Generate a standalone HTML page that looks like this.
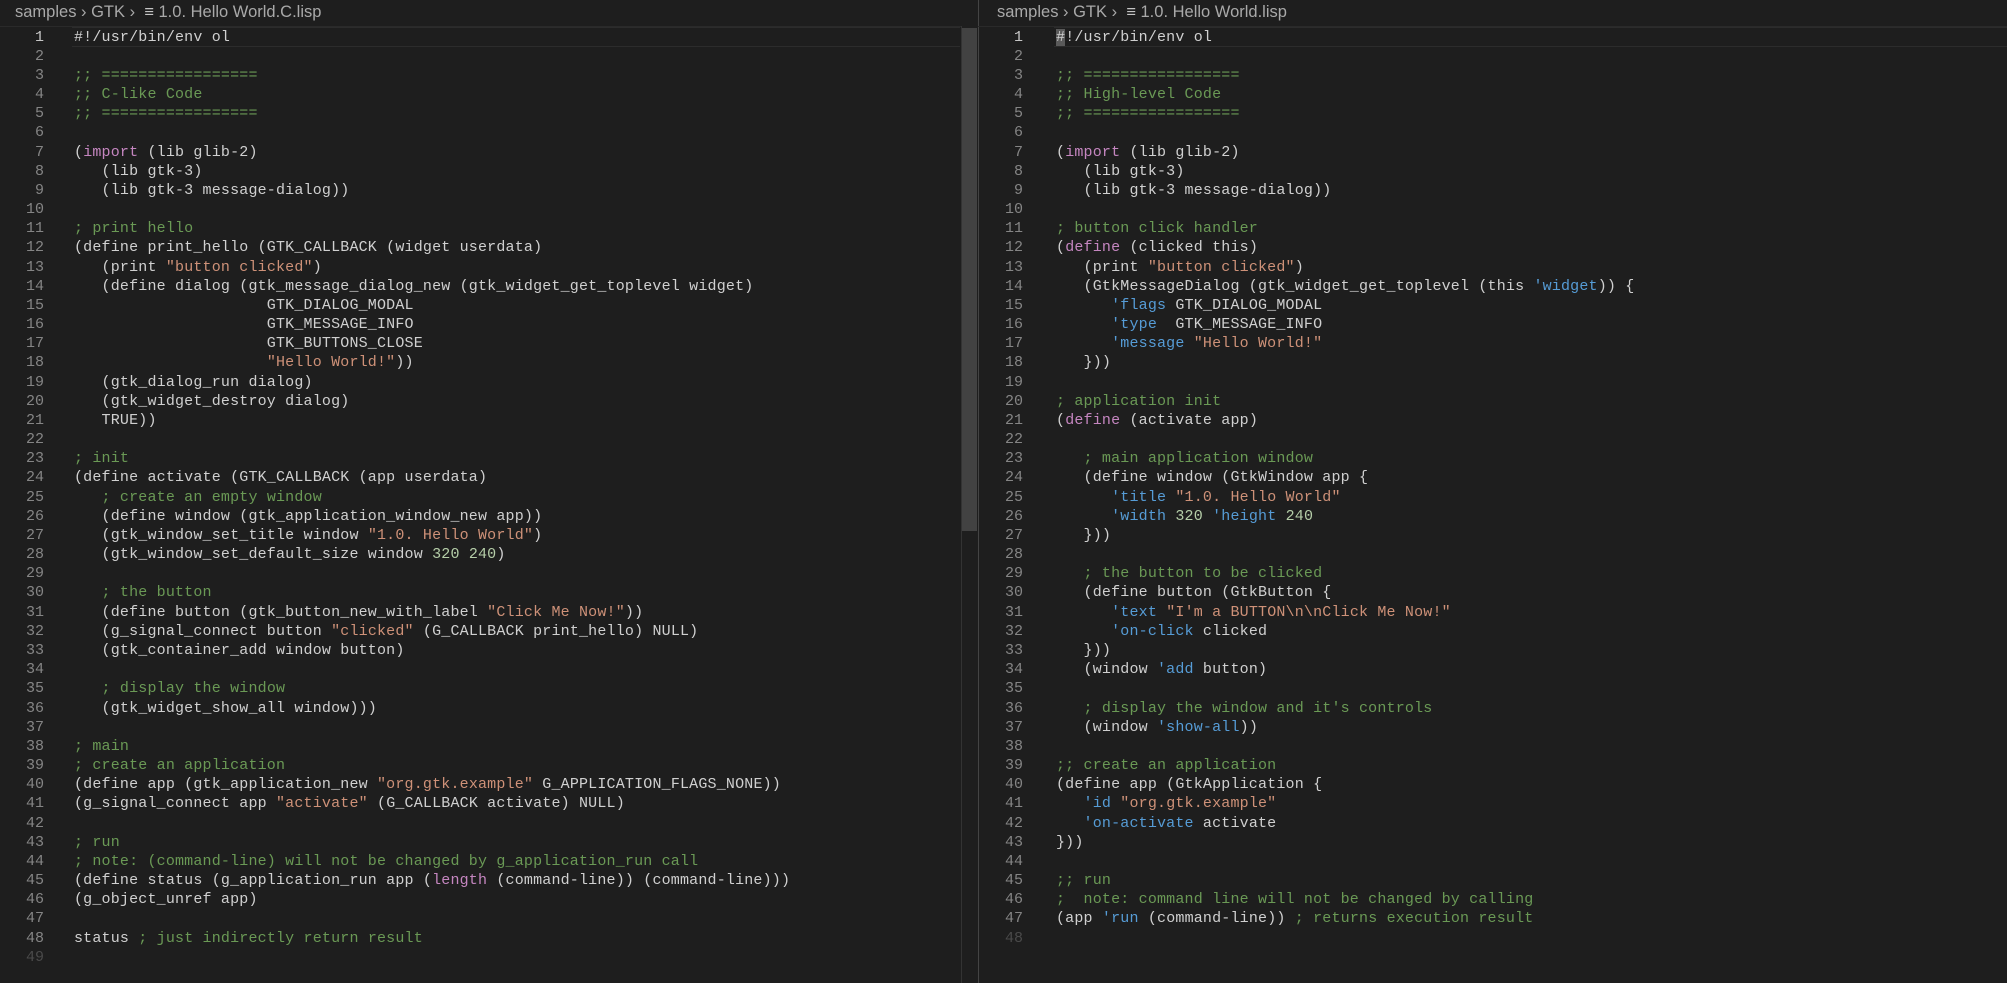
<!DOCTYPE html>
<html><head><meta charset="utf-8"><style>
html,body{margin:0;padding:0;background:#1e1e1e;width:2007px;height:983px;overflow:hidden}
.bc{position:absolute;top:3px;font:16.5px "Liberation Sans",sans-serif;color:#a9a9a9;white-space:pre}
.bc i{font-style:normal;color:#c5c5c5}
pre{margin:0;position:absolute;top:27.5px;font:15px/19.17px "Liberation Mono",monospace;letter-spacing:0.18px;color:#d0d0d0}
.ln{text-align:right;color:#858585;letter-spacing:0}
.ln b{font-weight:normal;color:#c6c6c6}
.c{color:#6a9955}.s{color:#ce9178}.k{color:#c586c0}.n{color:#b5cea8}.q{color:#569cd6}
.hl{position:absolute;top:27px;height:18px;border-top:1px solid #2c2c2c;border-bottom:1px solid #2c2c2c}
.cur{background:#5a5a5a}
</style></head><body>
<div class="bc" style="left:15px">samples › GTK ›  <i>≡</i> 1.0. Hello World.C.lisp</div>
<div class="bc" style="left:997px">samples › GTK ›  <i>≡</i> 1.0. Hello World.lisp</div>
<div class="hl" style="left:72px;width:888px"></div>
<div class="hl" style="left:1054px;width:953px"></div>
<div style="position:absolute;left:961px;top:26px;width:16px;height:957px;border-left:1px solid #333"></div>
<div style="position:absolute;left:962px;top:28px;width:15px;height:503px;background:#424242"></div>
<div style="position:absolute;left:978px;top:0;width:1px;height:983px;background:#444"></div>
<div style="position:absolute;left:978px;top:26px;width:1029px;height:1px;background:#2a2a2a"></div>
<div style="position:absolute;left:0;top:26px;width:961px;height:1px;background:#2a2a2a"></div>
<pre class="ln" style="left:0;width:44px"><b>1</b>
2
3
4
5
6
7
8
9
10
11
12
13
14
15
16
17
18
19
20
21
22
23
24
25
26
27
28
29
30
31
32
33
34
35
36
37
38
39
40
41
42
43
44
45
46
47
48
<span style="color:#4a4a4a">49</span></pre>
<pre style="left:74px">#!/usr/bin/env ol

<span class="c">;; =================</span>
<span class="c">;; C-like Code</span>
<span class="c">;; =================</span>

(<span class="k">import</span> (lib glib-2)
   (lib gtk-3)
   (lib gtk-3 message-dialog))

<span class="c">; print hello</span>
(define print_hello (GTK_CALLBACK (widget userdata)
   (print <span class="s">"button clicked"</span>)
   (define dialog (gtk_message_dialog_new (gtk_widget_get_toplevel widget)
                     GTK_DIALOG_MODAL
                     GTK_MESSAGE_INFO
                     GTK_BUTTONS_CLOSE
                     <span class="s">"Hello World!"</span>))
   (gtk_dialog_run dialog)
   (gtk_widget_destroy dialog)
   TRUE))

<span class="c">; init</span>
(define activate (GTK_CALLBACK (app userdata)
   <span class="c">; create an empty window</span>
   (define window (gtk_application_window_new app))
   (gtk_window_set_title window <span class="s">"1.0. Hello World"</span>)
   (gtk_window_set_default_size window <span class="n">320</span> <span class="n">240</span>)

   <span class="c">; the button</span>
   (define button (gtk_button_new_with_label <span class="s">"Click Me Now!"</span>))
   (g_signal_connect button <span class="s">"clicked"</span> (G_CALLBACK print_hello) NULL)
   (gtk_container_add window button)

   <span class="c">; display the window</span>
   (gtk_widget_show_all window)))

<span class="c">; main</span>
<span class="c">; create an application</span>
(define app (gtk_application_new <span class="s">"org.gtk.example"</span> G_APPLICATION_FLAGS_NONE))
(g_signal_connect app <span class="s">"activate"</span> (G_CALLBACK activate) NULL)

<span class="c">; run</span>
<span class="c">; note: (command-line) will not be changed by g_application_run call</span>
(define status (g_application_run app (<span class="k">length</span> (command-line)) (command-line)))
(g_object_unref app)

status <span class="c">; just indirectly return result</span></pre>
<pre class="ln" style="left:980px;width:43px"><b>1</b>
2
3
4
5
6
7
8
9
10
11
12
13
14
15
16
17
18
19
20
21
22
23
24
25
26
27
28
29
30
31
32
33
34
35
36
37
38
39
40
41
42
43
44
45
46
47
<span style="color:#4a4a4a">48</span></pre>
<pre style="left:1056px"><span class="cur">#</span>!/usr/bin/env ol

<span class="c">;; =================</span>
<span class="c">;; High-level Code</span>
<span class="c">;; =================</span>

(<span class="k">import</span> (lib glib-2)
   (lib gtk-3)
   (lib gtk-3 message-dialog))

<span class="c">; button click handler</span>
(<span class="k">define</span> (clicked this)
   (print <span class="s">"button clicked"</span>)
   (GtkMessageDialog (gtk_widget_get_toplevel (this <span class="q">'widget</span>)) {
      <span class="q">'flags</span> GTK_DIALOG_MODAL
      <span class="q">'type</span>  GTK_MESSAGE_INFO
      <span class="q">'message</span> <span class="s">"Hello World!"</span>
   }))

<span class="c">; application init</span>
(<span class="k">define</span> (activate app)

   <span class="c">; main application window</span>
   (define window (GtkWindow app {
      <span class="q">'title</span> <span class="s">"1.0. Hello World"</span>
      <span class="q">'width</span> <span class="n">320</span> <span class="q">'height</span> <span class="n">240</span>
   }))

   <span class="c">; the button to be clicked</span>
   (define button (GtkButton {
      <span class="q">'text</span> <span class="s">"I'm a BUTTON\n\nClick Me Now!"</span>
      <span class="q">'on-click</span> clicked
   }))
   (window <span class="q">'add</span> button)

   <span class="c">; display the window and it's controls</span>
   (window <span class="q">'show-all</span>))

<span class="c">;; create an application</span>
(define app (GtkApplication {
   <span class="q">'id</span> <span class="s">"org.gtk.example"</span>
   <span class="q">'on-activate</span> activate
}))

<span class="c">;; run</span>
<span class="c">;  note: command line will not be changed by calling</span>
(app <span class="q">'run</span> (command-line)) <span class="c">; returns execution result</span></pre>
</body></html>
